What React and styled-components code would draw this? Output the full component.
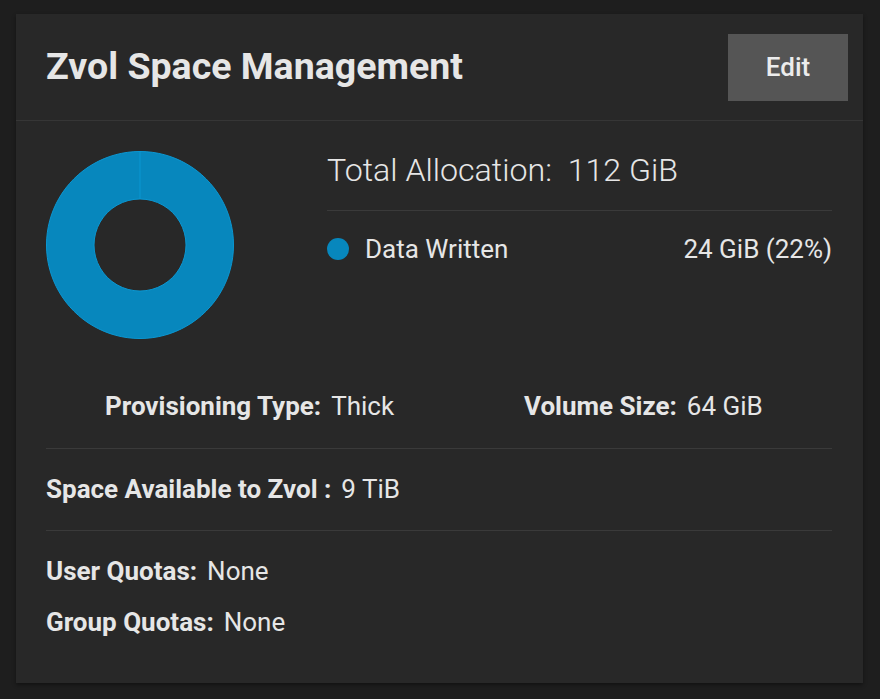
import React from "react";
import styled, { createGlobalStyle } from "styled-components";

const Global = createGlobalStyle`
  html, body { margin: 0; padding: 0; background: #1e1e1e; }
  body { font-family: Roboto, "Noto Sans", sans-serif; color: #e6e6e6; }
`;

const Page = styled.div`
  width: 880px;
  height: 699px;
  box-sizing: border-box;
  padding: 14px 17px 16px 16px;
  background: #1e1e1e;
`;

const Card = styled.div`
  background: #282828;
  height: 669px;
  box-shadow: 0 2px 4px rgba(0,0,0,0.4);
  display: flex;
  flex-direction: column;
`;

const Header = styled.div`
  display: flex;
  align-items: center;
  justify-content: space-between;
  height: 107px;
  box-sizing: border-box;
  padding: 0 15px 0 30px;
  border-bottom: 1px solid #363636;
`;

const Title = styled.h1`
  margin: 0;
  font-size: 37.5px;
  font-weight: 700;
  color: #e6e6e6;
  line-height: 1;
`;

const EditButton = styled.button`
  width: 120px;
  height: 67px;
  margin-top: 0;
  background: #555555;
  border: none;
  color: #ececec;
  font-family: Roboto, sans-serif;
  font-size: 26px;
  font-weight: 500;
`;

const Body = styled.div`
  padding: 0 31px 0 30px;
  display: flex;
  flex-direction: column;
`;

const Top = styled.div`
  display: flex;
  padding-top: 30px;
  height: 270px;
  box-sizing: border-box;
`;

const ChartBox = styled.div`
  width: 281px;
  flex: none;
`;

const Summary = styled.div`
  flex: 1;
  padding-top: 1px;
`;

const Total = styled.div`
  font-size: 32.2px;
  font-weight: 300;
  line-height: 37px;
  color: #e6e6e6;
  padding-bottom: 21px;
  border-bottom: 1px solid #3a3a3a;
`;

const Legend = styled.div`
  display: flex;
  align-items: center;
  margin-top: 23px;
  font-size: 26px;
  line-height: 30px;
  font-weight: 400;
`;

const Dot = styled.span`
  width: 22px;
  height: 22px;
  border-radius: 50%;
  background: ${p => p.$color};
  margin-right: 16px;
`;

const Grow = styled.span`
  flex: 1;
`;

const InfoRow = styled.div`
  display: flex;
  font-size: 26px;
  line-height: 30px;
  padding: ${p => p.$pad || "0"};
  border-bottom: ${p => (p.$divider ? "1px solid #3a3a3a" : "none")};
`;

const Pair = styled.div`
  width: ${p => p.$w || "auto"};
  margin-left: ${p => p.$ml || "0"};
`;

const Label = styled.span`
  font-weight: 700;
  margin-right: 10px;
`;

const Value = styled.span`
  font-weight: 400;
`;

const Quotas = styled.div`
  display: flex;
  flex-direction: column;
  gap: 21px;
  padding-top: 25px;
`;

function Donut() {
  const cx = 94, cy = 94, R = 93.5, r = 46;
  return (
    <svg width="188" height="188" viewBox="0 0 188 188">
      <path
        d={`M ${cx} ${cy - R} A ${R} ${R} 0 1 1 ${cx - 0.01} ${cy - R} Z M ${cx} ${cy - r} A ${r} ${r} 0 1 0 ${cx + 0.01} ${cy - r} Z`}
        fill="#0787bd"
        fillRule="evenodd"
        stroke="#0b97d2"
        strokeWidth="1"
      />
      <line x1={cx} y1={cy - R} x2={cx} y2={cy - r} stroke="#0b97d2" strokeWidth="1" />
    </svg>
  );
}

export default function App() {
  return (
    <>
      <Global />
      <Page>
        <Card>
          <Header>
            <Title>Zvol Space Management</Title>
            <EditButton>Edit</EditButton>
          </Header>
          <Body>
            <Top>
              <ChartBox>
                <Donut />
              </ChartBox>
              <Summary>
                <Total>Total Allocation:&nbsp; 112 GiB</Total>
                <Legend>
                  <Dot $color="#0787bd" />
                  <Grow>Data Written</Grow>
                  <span>24 GiB (22%)</span>
                </Legend>
              </Summary>
            </Top>
            <InfoRow $divider $pad="0 0 27px 0">
              <Pair $w="419px" $ml="59px">
                <Label>Provisioning Type:</Label>
                <Value>Thick</Value>
              </Pair>
              <Pair>
                <Label>Volume Size:</Label>
                <Value>64 GiB</Value>
              </Pair>
            </InfoRow>
            <InfoRow $divider $pad="25px 0 26px 0">
              <Pair>
                <Label>Space Available to Zvol :</Label>
                <Value>9 TiB</Value>
              </Pair>
            </InfoRow>
            <Quotas>
              <InfoRow>
                <Pair>
                  <Label>User Quotas:</Label>
                  <Value>None</Value>
                </Pair>
              </InfoRow>
              <InfoRow>
                <Pair>
                  <Label>Group Quotas:</Label>
                  <Value>None</Value>
                </Pair>
              </InfoRow>
            </Quotas>
          </Body>
        </Card>
      </Page>
    </>
  );
}
